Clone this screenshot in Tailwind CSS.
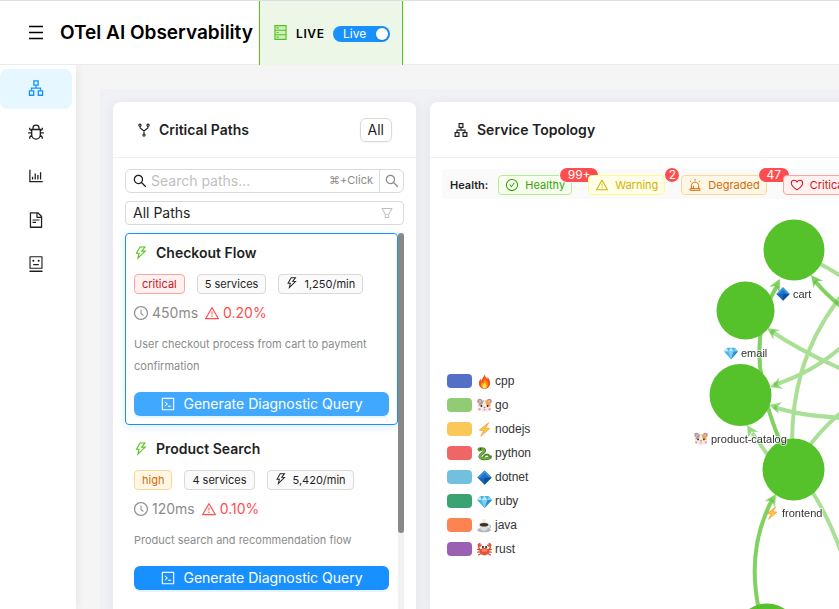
<!DOCTYPE html>
<html lang="en">
<head>
<meta charset="utf-8">
<title>OTel AI Observability</title>
<meta name="viewport" content="width=device-width, initial-scale=1">
<script src="https://cdn.jsdelivr.net/npm/@tailwindcss/browser@4"></script>
</head>
<body class="flex h-screen flex-col overflow-hidden bg-[#f5f5f5] font-['Inter','Liberation_Sans',sans-serif] text-sm text-[#1f1f1f]">

<!-- Icon sprite -->
<svg width="0" height="0" class="absolute" aria-hidden="true">
  <symbol id="i-apartment" viewBox="0 0 1024 1024"><path fill="currentColor" d="M908 640H804V488c0-4.400-3.600-8-8-8H548v-96h108c8.800 0 16-7.200 16-16V80c0-8.800-7.200-16-16-16H368c-8.800 0-16 7.200-16 16v288c0 8.800 7.200 16 16 16h108v96H228c-4.400 0-8 3.600-8 8v152H116c-8.800 0-16 7.200-16 16v288c0 8.800 7.200 16 16 16h288c8.800 0 16-7.200 16-16V656c0-8.800-7.200-16-16-16H292v-88h440v88H620c-8.800 0-16 7.200-16 16v288c0 8.800 7.200 16 16 16h288c8.800 0 16-7.200 16-16V656c0-8.800-7.200-16-16-16zm-564 76v168H176V716h168zm84-408V140h168v168H428zm420 576H680V716h168v168z"/></symbol>
  <symbol id="i-bug" viewBox="0 0 1024 1024"><g fill="none" stroke="currentColor" stroke-width="72"><path d="M268 370h488v300c0 130-105 244-244 244S268 800 268 670zM340 370V284c0-90 76-162 172-162s172 72 172 162v86M268 560H64M756 560h204M268 414C190 414 148 372 148 268M756 414c78 0 120-42 120-146M285 720c-90 10-137 62-137 172M739 720c90 10 137 62 137 172"/></g></symbol>
  <symbol id="i-bars" viewBox="0 0 1024 1024"><path fill="currentColor" d="M888 792H200V168c0-4.400-3.600-8-8-8h-56c-4.400 0-8 3.600-8 8v688c0 4.400 3.600 8 8 8h752c4.400 0 8-3.600 8-8v-56c0-4.400-3.600-8-8-8zm-600-80h56c4.400 0 8-3.600 8-8V560c0-4.400-3.600-8-8-8h-56c-4.400 0-8 3.600-8 8v144c0 4.400 3.600 8 8 8zm152 0h56c4.400 0 8-3.600 8-8V384c0-4.400-3.600-8-8-8h-56c-4.400 0-8 3.600-8 8v320c0 4.400 3.600 8 8 8zm152 0h56c4.400 0 8-3.600 8-8V462c0-4.400-3.600-8-8-8h-56c-4.400 0-8 3.600-8 8v242c0 4.400 3.600 8 8 8zm152 0h56c4.400 0 8-3.600 8-8V304c0-4.400-3.600-8-8-8h-56c-4.400 0-8 3.600-8 8v400c0 4.400 3.600 8 8 8z"/></symbol>
  <symbol id="i-file" viewBox="0 0 1024 1024"><path fill="currentColor" d="M854.600 288.600L639.400 73.400c-6-6-14.100-9.400-22.600-9.400H192c-17.700 0-32 14.300-32 32v832c0 17.700 14.300 32 32 32h640c17.700 0 32-14.300 32-32V311.300c0-8.500-3.400-16.700-9.400-22.700zM790.200 326H602V137.800L790.200 326zm1.800 562H232V136h302v216a42 42 0 0 0 42 42h216v494zM504 618H320c-4.400 0-8 3.600-8 8v48c0 4.400 3.600 8 8 8h184c4.400 0 8-3.600 8-8v-48c0-4.400-3.600-8-8-8zM312 490v48c0 4.400 3.600 8 8 8h384c4.400 0 8-3.600 8-8v-48c0-4.400-3.600-8-8-8H320c-4.400 0-8 3.600-8 8z"/></symbol>
  <symbol id="i-robot" viewBox="0 0 1024 1024"><path fill="currentColor" d="M300 328a60 60 0 1 0 120 0 60 60 0 1 0-120 0zM852 64H172c-17.700 0-32 14.300-32 32v660c0 17.700 14.300 32 32 32h680c17.700 0 32-14.300 32-32V96c0-17.700-14.300-32-32-32zm-32 660H204V128h616v596zM604 328a60 60 0 1 0 120 0 60 60 0 1 0-120 0zm250.200 556H169.800c-16.500 0-29.800 14.300-29.800 32v36c0 4.400 3.300 8 7.400 8h729.100c4.100 0 7.400-3.600 7.400-8v-36c.1-17.700-13.200-32-29.700-32zM664 508H360c-4.400 0-8 3.600-8 8v60c0 4.400 3.600 8 8 8h304c4.400 0 8-3.600 8-8v-60c0-4.400-3.600-8-8-8z"/></symbol>
  <symbol id="i-fork" viewBox="0 0 1024 1024"><g fill="none" stroke="currentColor" stroke-width="70"><circle cx="252" cy="208" r="72"/><circle cx="772" cy="208" r="72"/><circle cx="512" cy="836" r="72"/><path d="M262 282v70c0 20 8 38 24 50l226 176 226-176c16-12 24-30 24-50v-70M512 578v186"/></g></symbol>
  <symbol id="i-search" viewBox="0 0 1024 1024"><path fill="currentColor" d="M909.600 854.500L649.900 594.800C690.200 542.700 712 479 712 412c0-80.200-31.300-155.400-87.900-212.100-56.600-56.700-132-87.900-212.100-87.900s-155.500 31.300-212.100 87.900C143.200 256.500 112 331.800 112 412c0 80.100 31.300 155.500 87.900 212.100C256.500 680.800 331.800 712 412 712c67 0 130.600-21.800 182.700-62l259.700 259.600a8.200 8.200 0 0 0 11.600 0l43.600-43.500a8.200 8.200 0 0 0 0-11.600zM570.400 570.400C528 612.700 471.800 636 412 636s-116-23.300-158.400-65.600C211.300 528 188 471.800 188 412s23.300-116.100 65.600-158.400C296 211.300 352.200 188 412 188s116.100 23.200 158.400 65.600S636 352.200 636 412s-23.300 116.100-65.600 158.400z"/></symbol>
  <symbol id="i-filter" viewBox="0 0 1024 1024"><path fill="currentColor" d="M880.100 154H143.900c-24.500 0-39.800 26.700-27.500 48L349 597.400V838c0 17.700 14.200 32 31.800 32h262.400c17.600 0 31.800-14.300 31.800-32V597.400L907.700 202c12.200-21.300-3.100-48-27.600-48zM603.400 798H420.600V642h182.900v156zm9.600-236.600l-9.500 16.600h-183l-9.500-16.600L212.700 226h598.600L613 561.400z"/></symbol>
  <symbol id="i-bolt" viewBox="0 0 1024 1024"><path fill="currentColor" d="M848 359.300H627.700L825.800 109c4.100-5.300.4-13-6.300-13H436c-2.800 0-5.500 1.500-6.900 4L170 547.500c-3.100 5.300.7 12 6.900 12h174.400l-89.400 357.600c-1.900 7.800 7.500 13.300 13.300 7.700L853.500 373c5.200-4.900 1.700-13.700-5.500-13.700zM378.200 732.500l60.300-241H281.100l189.600-327.400h224.600L487 427.400h211L378.200 732.500z"/></symbol>
  <symbol id="i-clock" viewBox="0 0 1024 1024"><path fill="currentColor" d="M512 64C264.600 64 64 264.600 64 512s200.600 448 448 448 448-200.600 448-448S759.400 64 512 64zm0 820c-205.400 0-372-166.600-372-372s166.600-372 372-372 372 166.600 372 372-166.600 372-372 372z"/><path fill="currentColor" d="M686.700 638.600L544.100 535.500V288c0-4.400-3.600-8-8-8H488c-4.400 0-8 3.600-8 8v275.400c0 2.600 1.200 5 3.300 6.500l165.400 120.600c3.600 2.600 8.600 1.800 11.200-1.700l28.600-39c2.600-3.700 1.800-8.700-1.800-11.200z"/></symbol>
  <symbol id="i-warn" viewBox="0 0 1024 1024"><path fill="currentColor" d="M464 720a48 48 0 1 0 96 0 48 48 0 1 0-96 0zm16-304v184c0 4.400 3.600 8 8 8h48c4.400 0 8-3.600 8-8V416c0-4.400-3.600-8-8-8h-48c-4.400 0-8 3.600-8 8zm475.700 440l-416-720c-6.200-10.700-16.900-16-27.700-16s-21.600 5.300-27.700 16l-416 720C56 877.400 71.400 904 96 904h832c24.600 0 40-26.600 27.700-48zm-783.500-27.900L512 239.900l339.800 588.200H172.200z"/></symbol>
  <symbol id="i-code" viewBox="0 0 1024 1024"><path fill="currentColor" d="M516 673c0 4.400 3.400 8 7.500 8h185c4.100 0 7.500-3.600 7.500-8v-48c0-4.400-3.400-8-7.500-8h-185c-4.100 0-7.500 3.600-7.500 8v48zm-194.900 6.100l192-161c3.800-3.200 3.800-9.100 0-12.300l-192-160.900A7.950 7.950 0 0 0 308 351v62.700c0 2.400 1 4.600 2.900 6.100L420.700 512l-109.800 92.200a8.100 8.100 0 0 0-2.900 6.100V673c0 6.800 7.900 10.500 13.100 6.100zM880 112H144c-17.700 0-32 14.300-32 32v736c0 17.700 14.300 32 32 32h736c17.700 0 32-14.300 32-32V144c0-17.700-14.300-32-32-32zm-40 728H184V184h656v656z"/></symbol>
  <symbol id="i-check" viewBox="0 0 1024 1024"><path fill="currentColor" d="M699 353h-46.900c-10.200 0-19.900 4.900-25.900 13.300L469 584.300l-71.200-98.800c-6-8.300-15.600-13.300-25.900-13.300H325c-6.500 0-10.300 7.400-6.500 12.700l124.600 172.800a31.800 31.800 0 0 0 51.700 0l210.600-292c3.900-5.300.1-12.700-6.400-12.700z"/><circle cx="512" cy="512" r="410" fill="none" stroke="currentColor" stroke-width="76"/></symbol>
  <symbol id="i-alert" viewBox="0 0 1024 1024"><g fill="none" stroke="currentColor" stroke-width="72"><path d="M248 780V564c0-146 118-264 264-264s264 118 264 264v216M150 780h724v120H150zM512 70v118M154 206l84 84M870 206l-84 84M392 780V570"/></g></symbol>
  <symbol id="i-heart" viewBox="0 0 1024 1024"><path fill="none" stroke="currentColor" stroke-width="76" stroke-linejoin="round" d="M512 868C300 716 96 560 96 378c0-118 92-210 204-210 92 0 168 46 212 122 44-76 120-122 212-122 112 0 204 92 204 210 0 182-204 338-416 490z"/></symbol>
  <symbol id="i-db" viewBox="0 0 1024 1024"><path fill="currentColor" opacity=".18" d="M160 96h704v832H160z"/><g fill="none" stroke="currentColor" stroke-width="68"><path d="M178 98h668v828H178zM178 374h668M178 650h668"/><path d="M280 236h120M280 512h120M280 788h120"/></g></symbol>

  <!-- Language glyphs -->
  <symbol id="e-cpp" viewBox="0 0 16 16"><path fill="#f4511e" d="M8 .5c.6 2.300 2 3 3 4.800.3-.7.200-1.300.1-2C13 5 14 7.500 14 9.800 14 13.300 11.300 15.700 8 15.700S2 13.300 2 10c0-2 .9-3.600 2-4.900 0 1 .2 1.700.8 2.200C5 4.500 7.600 3.500 8 .5z"/><path fill="#ff9800" d="M8.300 4.500c.4 2 3.400 3.400 3.400 6.700 0 2.500-1.600 4.200-3.700 4.200s-3.900-1.500-3.900-4c0-1.300.5-2.300 1.100-3 .2.900.6 1.300 1.200 1.500C6.300 7.500 8.500 6.600 8.300 4.500z"/><path fill="#ffe45c" d="M8.200 9c.3 1.200 1.900 2 1.900 3.800 0 1.400-.9 2.400-2.100 2.400s-2.200-.9-2.200-2.300C5.800 11.200 8 10.800 8.200 9z"/></symbol>
  <symbol id="e-go" viewBox="0 0 16 16"><circle cx="3" cy="3.500" r="2.700" fill="#b98a8f"/><circle cx="13" cy="3.500" r="2.700" fill="#b98a8f"/><circle cx="3.200" cy="3.700" r="1.500" fill="#f3a5ae"/><circle cx="12.800" cy="3.700" r="1.500" fill="#f3a5ae"/><path fill="#f3ece6" d="M8 2.500c4 0 6 2.500 6.800 6.500.6 3.200-2.300 6-6.800 6S.6 12.200 1.200 9C2 5 4 2.500 8 2.500z"/><path fill="#f2a444" d="M8.500 2.500c3.800.2 5.600 2.600 6.200 6.200-2.200.6-4.600-.3-5.200-2.700z"/><path fill="#a9a2a5" d="M7.500 2.500C4 2.800 2.200 5 1.400 8.200c1.900.5 4-.6 4.800-2.600z"/><circle cx="4.700" cy="8.500" r="1" fill="#222"/><circle cx="11.300" cy="8.500" r="1" fill="#222"/><ellipse cx="8" cy="10" rx="1.100" ry=".8" fill="#e8637a"/><path fill="#e6798c" d="M6.800 12h2.400L8 13.500z"/><circle cx="2.500" cy="12" r="1.300" fill="#f09aa8"/><circle cx="13.500" cy="12" r="1.300" fill="#f09aa8"/></symbol>
  <symbol id="e-node" viewBox="0 0 16 16"><path fill="#ffc83d" stroke="#f08c2e" stroke-width=".7" stroke-linejoin="round" d="M12.500.8 2.500 8.600l4.700.7L4 15.300 13.500 7 8.900 6.300z"/></symbol>
  <symbol id="e-py" viewBox="0 0 16 16"><g fill="none" stroke-linecap="round"><path stroke="#35702b" stroke-width="3" d="M2.500 4.200C5 2 8.500 3.200 8 5.500 7.500 7.500 3 8.500 3 11c0 3 6.500 3.500 11 1.500"/><path stroke="#78ad35" stroke-width="2" d="M2.500 4C5 2 8.300 3.300 7.800 5.400 7.300 7.400 3 8.500 3 11c0 2.700 6 3.400 11 1.400"/><path stroke="#4f8a2c" stroke-width="2.200" d="M7 11.500c2-3 5-3 6-.8.700 1.600 1.500 1.300 2 .3"/></g><ellipse cx="3.500" cy="3.500" rx="2.900" ry="2.100" fill="#5f982f"/><circle cx="3.600" cy="3.200" r=".7" fill="#162510"/></symbol>
  <symbol id="e-net" viewBox="0 0 16 16"><path fill="#1667b8" d="M8 .4 15.600 8 8 15.600.4 8z"/><path fill="#3f97e2" d="M8 .4 15.600 8H.4z"/><path fill="#1a74cc" d="M8 3 13 8H3z"/><path fill="#0c4f9c" d="m8 15.600 7.600-7.600H8z"/></symbol>
  <symbol id="e-ruby" viewBox="0 0 16 16"><path fill="#4bb4e9" d="M3.500 2h9L16 6.300 8 15 0 6.300z"/><path fill="#bdeaff" d="m3.500 2 1.300 4.300H0zM8 2l3.200 4.300H4.800z"/><path fill="#7fd0f5" d="m12.500 2-1.300 4.300H16zM4.800 6.300h6.400L8 15z"/><path fill="#2c8fd0" d="M11.200 6.300H16L8 15z"/></symbol>
  <symbol id="e-java" viewBox="0 0 16 16"><ellipse cx="7.500" cy="12.800" rx="7.300" ry="2.500" fill="#b4b9bf"/><path fill="#dcdfe2" d="M2.500 7h10c0 4-2 6.500-5 6.500S2.500 11 2.500 7z"/><path fill="none" stroke="#b4b9bf" stroke-width="1.300" d="M12.300 8c3-.6 3 3.300-.8 3"/><ellipse cx="7.500" cy="7" rx="5.200" ry="2.400" fill="#cfd3d6"/><ellipse cx="7.500" cy="7.200" rx="4.500" ry="1.900" fill="#4a2a1c"/><path fill="none" stroke="#c9cdd1" stroke-width=".8" d="M6.500 4.500c-1-1.300 1-1.800 0-3.500M8.500 4.500c-1-1.300 1-1.800 0-3"/></symbol>
  <symbol id="e-rust" viewBox="0 0 16 16"><g fill="none" stroke="#d8452e" stroke-width="1.300" stroke-linecap="round"><path d="M4 9 .8 7.800M4 10.500l-3.200.3M4.500 12l-2.800 1.800M12 9l3.200-1.200M12 10.500l3.200.3M11.500 12l2.800 1.800M3.500 8C2 7 1.500 5.500 2 4M12.500 8C14 7 14.500 5.500 14 4M6.300 7V5M9.700 7V5"/></g><path fill="#e2543a" d="M1 4.800C-.2 2.500 1.500.5 4.300.7L3 2.300l2.300.3C5.200 4.600 3 5.800 1 4.800zM15 4.800C16.200 2.500 14.500.5 11.700.7L13 2.300l-2.300.3c.1 2 2.300 3.200 4.300 2.200z"/><ellipse cx="8" cy="10.300" rx="5" ry="4" fill="#e2543a"/><ellipse cx="8" cy="9" rx="3.200" ry="1.500" fill="#f5876b"/><circle cx="6.300" cy="5.200" r="1" fill="#2a1512"/><circle cx="9.700" cy="5.200" r="1" fill="#2a1512"/></symbol>
</svg>

<header class="relative z-10 flex h-[65px] shrink-0 items-center border-t border-b border-t-[#dedede] border-b-[#ebebeb] bg-white">
  <button type="button" aria-label="Toggle menu" class="ml-7 flex size-4 items-center justify-center text-black">
    <svg viewBox="0 0 16 16" class="size-4"><path d="M1 1.500h14M1 7.500h14M1 13.500h14" stroke="currentColor" stroke-width="1.500" fill="none"/></svg>
  </button>
  <h1 class="ml-4 w-[191px] text-[19px] leading-7 font-semibold whitespace-nowrap text-black">OTel AI Observability</h1>
  <div class="z-10 ml-2 -mb-px flex h-[64px] w-36 items-center border-r border-l border-[#52c41a] bg-[#edf7e8] pt-0.5 pl-3">
    <svg class="-mt-1 size-[17px] shrink-0 text-[#52c41a]"><use href="#i-db"/></svg>
    <span class="ml-[7px] w-[37px] text-xs font-semibold tracking-wider text-black">LIVE</span>
    <button type="button" role="switch" aria-checked="true" class="flex h-4 w-[57px] shrink-0 items-center justify-between rounded-full bg-[#1890ff] pr-0.5 pl-2.5 text-xs leading-4 text-white">Live<span class="size-3 rounded-full bg-white shadow"></span></button>
  </div>
</header>

<div class="flex min-h-0 flex-1">
  <nav aria-label="Main" class="z-[5] flex w-[76px] shrink-0 flex-col gap-1 bg-white pt-1 pr-1 shadow-[2px_0_8px_rgba(0,0,0,0.06)]">
    <a href="#topology" aria-label="Topology" aria-current="page" class="flex h-10 items-center justify-center rounded-lg bg-[#e6f7ff] pb-0.5 text-[#1890ff]"><svg class="size-[18px]"><use href="#i-apartment"/></svg></a>
    <a href="#traces" aria-label="Traces" class="flex h-10 items-center justify-center rounded-lg pb-0.5"><svg class="size-[18px]"><use href="#i-bug"/></svg></a>
    <a href="#metrics" aria-label="Metrics" class="flex h-10 items-center justify-center rounded-lg pb-0.5"><svg class="size-[18px]"><use href="#i-bars"/></svg></a>
    <a href="#logs" aria-label="Logs" class="flex h-10 items-center justify-center rounded-lg pb-0.5"><svg class="size-[18px]"><use href="#i-file"/></svg></a>
    <a href="#insights" aria-label="Insights" class="flex h-10 items-center justify-center rounded-lg pb-0.5"><svg class="size-[18px]"><use href="#i-robot"/></svg></a>
  </nav>

  <main class="flex min-w-0 flex-1 pt-6 pl-6">
    <div class="flex flex-1 gap-3 bg-[#eff1f5] pt-3 pl-3">

      <section class="flex w-[305px] shrink-0 flex-col overflow-hidden rounded-t-lg border border-b-0 border-[#ececf0] bg-white shadow-[0_2px_12px_rgba(0,0,0,0.06)]">
        <div class="flex h-14 shrink-0 items-center border-b border-[#f0f0f0] px-6">
          <svg class="mr-[7px] -ml-px size-4 shrink-0"><use href="#i-fork"/></svg>
          <h2 class="flex-1 text-sm font-semibold">Critical Paths</h2>
          <button type="button" class="h-6 rounded-md border border-[#d9d9d9] bg-white px-[7px] text-sm leading-none shadow-xs">All</button>
        </div>
        <div class="flex min-h-0 flex-1 flex-col px-3 pt-[11px]">
          <form role="search" class="flex h-6 shrink-0 items-center rounded-md border border-[#d9d9d9]">
            <svg class="ml-1.5 size-4 shrink-0"><use href="#i-search"/></svg>
            <input type="search" aria-label="Search paths" placeholder="Search paths..." class="ml-[3px] min-w-0 flex-1 bg-transparent text-sm leading-5 outline-none placeholder:text-[#bfbfbf]">
            <span class="mr-1.5 text-[11px] text-[#8c8c8c]">⌘+Click</span>
            <button type="button" aria-label="Search" class="flex h-full w-6 shrink-0 items-center justify-center border-l border-[#d9d9d9] text-[#8c8c8c]"><svg class="size-4"><use href="#i-search"/></svg></button>
          </form>
          <div class="relative mt-2 flex h-6 shrink-0">
            <select aria-label="Path filter" class="w-full appearance-none rounded border border-[#d9d9d9] bg-white pl-[7px] text-sm leading-5 text-[#1f1f1f]"><option>All Paths</option></select>
            <svg class="pointer-events-none absolute top-[5px] right-2.5 size-3.5 text-[#bfbfbf]"><use href="#i-filter"/></svg>
          </div>

          <div class="mt-2 flex min-h-0 flex-1">
            <ul class="flex min-w-0 flex-1 flex-col gap-1">
              <li class="shrink-0 rounded border border-[#1890ff] p-2 shadow-[0_2px_8px_rgba(24,144,255,0.15)]">
                <h3 class="flex h-[22px] items-center gap-[7px] text-sm font-semibold"><svg class="-ml-px size-4 text-[#52c41a]"><use href="#i-bolt"/></svg>Checkout Flow</h3>
                <div class="mt-2.5 flex gap-3 text-[11px] leading-[18px]">
                  <span class="rounded border border-[#ffa39e] bg-[#fff1f0] px-[7px] text-[#cf1322]">critical</span>
                  <span class="rounded border border-[#d9d9d9] bg-[#fafafa] px-[7px]">5 services</span>
                  <span class="flex gap-[5px] rounded border border-[#d9d9d9] bg-[#fafafa] px-[7px]"><svg class="mt-px -ml-px size-3.5"><use href="#i-bolt"/></svg>1,250/min</span>
                </div>
                <div class="mt-2 flex h-[22px] items-center text-sm text-[#8c8c8c]">
                  <svg class="mr-[3px] -ml-px size-4"><use href="#i-clock"/></svg>450ms
                  <span class="ml-1.5 flex items-center text-[#ff4d4f]"><svg class="mr-[3px] size-4"><use href="#i-warn"/></svg>0.20%</span>
                </div>
                <p class="mt-[9px] text-[11px] leading-[22px] text-[#8c8c8c]">User checkout process from cart to payment confirmation</p>
                <button type="button" class="mt-[15px] flex h-6 w-full items-center justify-center gap-[7px] rounded-md bg-[#40a9ff] text-sm text-white shadow-[0_2px_0_rgba(5,145,255,0.1)]"><svg class="size-4"><use href="#i-code"/></svg>Generate Diagnostic Query</button>
              </li>
              <li class="shrink-0 rounded border border-transparent p-2">
                <h3 class="flex h-[22px] items-center gap-[7px] text-sm font-semibold"><svg class="-ml-px size-4 text-[#52c41a]"><use href="#i-bolt"/></svg>Product Search</h3>
                <div class="mt-2.5 flex gap-3 text-[11px] leading-[18px]">
                  <span class="rounded border border-[#ffd591] bg-[#fff7e6] px-[7px] text-[#d46b08]">high</span>
                  <span class="rounded border border-[#d9d9d9] bg-[#fafafa] px-[7px]">4 services</span>
                  <span class="flex gap-[5px] rounded border border-[#d9d9d9] bg-[#fafafa] px-[7px]"><svg class="mt-px -ml-px size-3.5"><use href="#i-bolt"/></svg>5,420/min</span>
                </div>
                <div class="mt-2 flex h-[22px] items-center text-sm text-[#8c8c8c]">
                  <svg class="mr-[3px] -ml-px size-4"><use href="#i-clock"/></svg>120ms
                  <span class="ml-1.5 flex items-center text-[#ff4d4f]"><svg class="mr-[3px] size-4"><use href="#i-warn"/></svg>0.10%</span>
                </div>
                <p class="mt-[9px] text-[11px] leading-[22px] text-[#8c8c8c]">Product search and recommendation flow</p>
                <button type="button" class="mt-[15px] flex h-6 w-full items-center justify-center gap-[7px] rounded-md bg-[#1890ff] text-sm text-white shadow-[0_2px_0_rgba(5,145,255,0.1)]"><svg class="size-4"><use href="#i-code"/></svg>Generate Diagnostic Query</button>
              </li>
            </ul>
            <div class="w-1.5 shrink-0 rounded-t-full bg-[#f1f1f1]"><div class="h-[300px] rounded-full bg-[#888]"></div></div>
          </div>
        </div>
      </section>

      <section class="flex min-w-[640px] flex-1 flex-col overflow-hidden rounded-t-lg border border-b-0 border-[#ececf0] bg-white shadow-[0_2px_12px_rgba(0,0,0,0.06)]">
        <div class="flex h-14 shrink-0 items-center border-b border-[#f0f0f0] px-6">
          <svg class="mr-2 -ml-px size-4 shrink-0"><use href="#i-apartment"/></svg>
          <h2 class="text-sm font-semibold">Service Topology</h2>
        </div>
        <div class="flex min-h-0 flex-1 flex-col px-3 pt-[11px]">
          <div class="flex h-[30px] shrink-0 items-center gap-4 rounded bg-[#fafafa] pt-0.5 pl-2 text-[11px] leading-[18px]">
            <strong class="-mr-1.5 font-semibold">Health:</strong>
            <span class="relative flex items-center gap-1.5 rounded border border-[#b7eb8f] bg-[#f6ffed] px-1.5 text-[#389e0d]"><svg class="size-3.5"><use href="#i-check"/></svg>Healthy<sup class="absolute -top-2 left-[calc(100%+8px)] flex h-3.5 w-[38px] -translate-x-1/2 items-center justify-center rounded-full bg-[#ff4d4f] text-xs leading-none text-white ring-1 ring-white">99+</sup></span>
            <span class="relative flex items-center gap-1.5 rounded border border-[#fffb8f] bg-[#feffe6] px-1.5 text-[#d4b106]"><svg class="size-3.5"><use href="#i-warn"/></svg>Warning<sup class="absolute -top-2 left-[calc(100%+8px)] flex size-3.5 -translate-x-1/2 items-center justify-center rounded-full bg-[#ff4d4f] text-xs leading-none text-white ring-1 ring-white">2</sup></span>
            <span class="relative flex items-center gap-1.5 rounded border border-[#ffd591] bg-[#fff7e6] px-1.5 text-[#d46b08]"><svg class="size-3.5"><use href="#i-alert"/></svg>Degraded<sup class="absolute -top-2 left-[calc(100%+8px)] flex h-3.5 w-[30px] -translate-x-1/2 items-center justify-center rounded-full bg-[#ff4d4f] text-xs leading-none text-white ring-1 ring-white">47</sup></span>
            <span class="relative flex items-center gap-1.5 rounded border border-[#ffa39e] bg-[#fff1f0] px-1.5 text-[#cf1322]"><svg class="size-3.5"><use href="#i-heart"/></svg>Critical</span>
          </div>

          <div class="relative min-h-0 flex-1 overflow-hidden font-['Liberation_Sans',Arial,sans-serif]">
            <!-- Dependency graph -->
            <svg class="absolute inset-0 h-[480px] w-[616px]" viewBox="442 199 616 480" role="img" aria-label="Service dependency graph">
              <defs>
                <path id="arrow" d="M0 0-12 6-8 0-12-6z"/>
              </defs>
              <g fill="none" stroke="#55c22b" stroke-width="4">
                <g opacity=".5">
                  <path d="M818 263Q835 271 852 284M771 331Q800 351 846 371M774 385Q815 372 846 343M774 407Q800 416 846 418M792 444C792 400 800 345 846 290M808 448Q820 430 846 408M770 458 752 433M811 490Q829 517 844 560"/>
                </g>
                <g opacity=".75"><path d="M793 469Q735 355 777 286M815 281Q827 296 846 310M759 610Q746 550 772 500"/></g>
              </g>
              <g fill="#55c22b">
                <g opacity=".75"><use href="#arrow" transform="translate(780 279) rotate(-62)"/><use href="#arrow" transform="translate(811 275) rotate(-128)"/><use href="#arrow" transform="translate(776 494) rotate(-58)"/></g>
                <g opacity=".6"><use href="#arrow" transform="translate(767 328) rotate(-145)"/><use href="#arrow" transform="translate(770 387) rotate(162)"/><use href="#arrow" transform="translate(769 405) rotate(-165)"/><use href="#arrow" transform="translate(747 425) rotate(-122)"/></g>
                <circle cx="794" cy="250" r="30.500"/><circle cx="745.500" cy="310.500" r="29"/><circle cx="740.500" cy="395" r="31"/><circle cx="793.500" cy="469.500" r="31"/><circle cx="767" cy="634.500" r="31"/>
              </g>
              <use href="#e-net" x="776" y="287" width="14" height="14"/><use href="#e-ruby" x="724" y="346" width="14" height="14"/><use href="#e-go" x="694" y="432" width="14" height="14"/><use href="#e-node" x="765" y="506" width="14" height="14"/>
              <g font-size="11" fill="#333" stroke="#fff" stroke-opacity=".7" stroke-width="2" paint-order="stroke">
                <text x="793" y="298">cart</text><text x="741" y="357">email</text><text x="711" y="443">product-catalog</text><text x="782" y="517">frontend</text>
              </g>
            </svg>

            <ul class="relative mt-[170px] ml-[5px] w-fit text-xs leading-6 text-[#333]">
              <li class="flex items-center"><span class="mr-[5px] h-3.5 w-[25px] rounded bg-[#5470c6]"></span><svg class="mr-[3px] size-[15px]"><use href="#e-cpp"/></svg>cpp</li>
              <li class="flex items-center"><span class="mr-[5px] h-3.5 w-[25px] rounded bg-[#91cc75]"></span><svg class="mr-[3px] size-[15px]"><use href="#e-go"/></svg>go</li>
              <li class="flex items-center"><span class="mr-[5px] h-3.5 w-[25px] rounded bg-[#fac858]"></span><svg class="mr-[3px] size-[15px]"><use href="#e-node"/></svg>nodejs</li>
              <li class="flex items-center"><span class="mr-[5px] h-3.5 w-[25px] rounded bg-[#ee6666]"></span><svg class="mr-[3px] size-[15px]"><use href="#e-py"/></svg>python</li>
              <li class="flex items-center"><span class="mr-[5px] h-3.5 w-[25px] rounded bg-[#73c0de]"></span><svg class="mr-[3px] size-[15px]"><use href="#e-net"/></svg>dotnet</li>
              <li class="flex items-center"><span class="mr-[5px] h-3.5 w-[25px] rounded bg-[#3ba272]"></span><svg class="mr-[3px] size-[15px]"><use href="#e-ruby"/></svg>ruby</li>
              <li class="flex items-center"><span class="mr-[5px] h-3.5 w-[25px] rounded bg-[#fc8452]"></span><svg class="mr-[3px] size-[15px]"><use href="#e-java"/></svg>java</li>
              <li class="flex items-center"><span class="mr-[5px] h-3.5 w-[25px] rounded bg-[#9a60b4]"></span><svg class="mr-[3px] size-[15px]"><use href="#e-rust"/></svg>rust</li>
            </ul>
          </div>
        </div>
      </section>
    </div>
  </main>
</div>
</body>
</html>
